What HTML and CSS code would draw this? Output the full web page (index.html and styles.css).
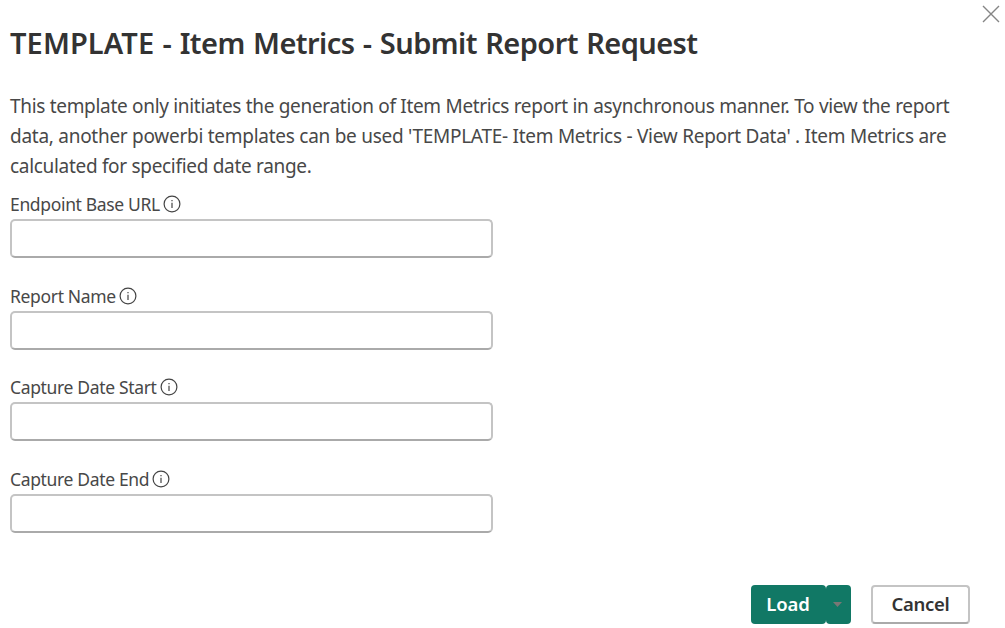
FILE: index.html
```
<!DOCTYPE html>
<html lang="en">
<head>
    <meta charset="UTF-8">
    <meta name="viewport" content="width=device-width, initial-scale=1.0">
    <title>Submit Report Request</title>
    <link rel="stylesheet" href="styles.css">
</head>
<body>

    <div class="dialog">
        <button class="close" aria-label="Close">
            <svg width="18" height="18" viewBox="0 0 18 18"><path d="M1 1L17 17M17 1L1 17"/></svg>
        </button>

        <h1><span class="prefix">TEMPLATE</span> - Item Metrics - Submit Report Request</h1>

        <p class="description">
            This template only initiates the generation of Item Metrics report in asynchronous manner. To view the report<br>
            <span class="wide">data, another powerbi templates can be used 'TEMPLATE- Item Metrics - View Report Data' . Item Metrics are</span><br>
            calculated for specified date range.
        </p>

        <form class="fields">
            <div class="field">
                <label for="endpoint">Endpoint Base URL
                    <svg class="info" viewBox="0 0 18 18"><circle cx="9" cy="9" r="7.9"/><path d="M9 7.8V13M9 5V6.3"/></svg>
                </label>
                <input type="text" id="endpoint">
            </div>
            <div class="field">
                <label for="report">Report Name
                    <svg class="info" viewBox="0 0 18 18"><circle cx="9" cy="9" r="7.9"/><path d="M9 7.8V13M9 5V6.3"/></svg>
                </label>
                <input type="text" id="report">
            </div>
            <div class="field">
                <label for="start">Capture Date Start
                    <svg class="info" viewBox="0 0 18 18"><circle cx="9" cy="9" r="7.9"/><path d="M9 7.8V13M9 5V6.3"/></svg>
                </label>
                <input type="text" id="start">
            </div>
            <div class="field">
                <label for="end">Capture Date End
                    <svg class="info" viewBox="0 0 18 18"><circle cx="9" cy="9" r="7.9"/><path d="M9 7.8V13M9 5V6.3"/></svg>
                </label>
                <input type="text" id="end">
            </div>
        </form>

        <div class="buttons">
            <div class="split">
                <button class="load">Load</button>
                <button class="load-menu" aria-label="More load options">
                    <svg width="9" height="5" viewBox="0 0 9 5"><path d="M0 0H9L4.5 5Z"/></svg>
                </button>
            </div>
            <button class="cancel">Cancel</button>
        </div>
    </div>

</body>
</html>
```

FILE: styles.css
```
* {
    box-sizing: border-box;
}
body {
    margin: 0;
    background: #fff;
    font-family: "Segoe UI", "Noto Sans", sans-serif;
    color: #484848;
}
.dialog {
    position: relative;
    height: 628px;
    padding: 23px 35px 4px 10px;
    display: flex;
    flex-direction: column;
    overflow: hidden;
}
button {
    padding: 0;
    border: none;
    background: none;
    font-family: inherit;
    cursor: pointer;
}
.close {
    position: absolute;
    top: 5px;
    right: 5px;
    width: 18px;
    height: 18px;
}
.close svg {
    display: block;
    fill: none;
    stroke: #858585;
    stroke-width: 1.4;
}
h1 {
    margin: 0;
    font-size: 29px;
    font-weight: 600;
    line-height: 40px;
    letter-spacing: -0.57px;
    word-spacing: 1.4px;
    color: #333;
    white-space: nowrap;
}
.prefix {
    letter-spacing: 0.1px;
}
.description {
    margin: 28px 0 0;
    font-size: 19px;
    line-height: 30px;
    letter-spacing: -0.31px;
    white-space: nowrap;
}
.wide {
    letter-spacing: -0.27px;
}
.fields {
    margin-top: 9px;
}
.field {
    height: 91.7px;
}
label {
    display: flex;
    align-items: center;
    gap: 3px;
    height: 29px;
    padding-bottom: 1px;
    font-size: 17.5px;
    letter-spacing: -0.34px;
    white-space: nowrap;
}
.info {
    width: 18px;
    height: 18px;
    fill: none;
    stroke: #444;
    stroke-width: 1.2;
}
input {
    display: block;
    width: 483px;
    height: 39px;
    padding: 0 8px;
    border: 2px solid #c4c4c4;
    border-bottom-color: #aaa;
    border-radius: 5px;
    font: inherit;
}
.buttons {
    display: flex;
    justify-content: flex-end;
    gap: 20px;
    margin-top: auto;
}
.split {
    display: flex;
}
.load,
.load-menu {
    height: 39px;
    border-radius: 4px;
    background: #117865;
    color: #fff;
}
.load {
    width: 75px;
    padding: 0 1px 2px 0;
    font-size: 18.5px;
    font-weight: 600;
    letter-spacing: -0.1px;
}
.load-menu {
    width: 25px;
    padding-right: 3px;
    display: flex;
    align-items: center;
    justify-content: center;
}
.load-menu svg {
    fill: #797775;
}
.cancel {
    width: 99px;
    height: 39px;
    padding-bottom: 2px;
    border: 2px solid #c4c4c4;
    border-bottom-color: #aaa;
    border-radius: 4px;
    font-size: 18.5px;
    font-weight: 600;
    letter-spacing: -0.3px;
    color: #333;
}
```
